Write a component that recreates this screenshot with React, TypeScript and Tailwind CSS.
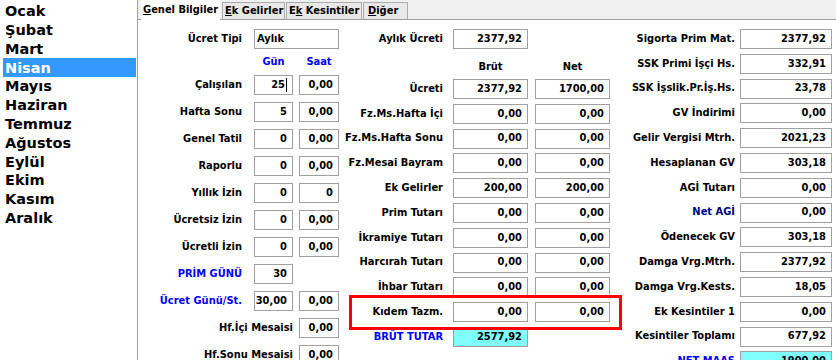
import React from "react";

const months = ["Ocak", "Şubat", "Mart", "Nisan", "Mayıs", "Haziran", "Temmuz", "Ağustos", "Eylül", "Ekim", "Kasım", "Aralık"];

type LeftRow = { label: string; gun?: string; saat?: string; blue?: boolean; caret?: boolean };

const leftRows: LeftRow[] = [
  { label: "Çalışılan", gun: "25", saat: "0,00", caret: true },
  { label: "Hafta Sonu", gun: "5", saat: "0,00" },
  { label: "Genel Tatil", gun: "0", saat: "0,00" },
  { label: "Raporlu", gun: "0", saat: "0,00" },
  { label: "Yıllık İzin", gun: "0", saat: "0" },
  { label: "Ücretsiz İzin", gun: "0", saat: "0,00" },
  { label: "Ücretli İzin", gun: "0", saat: "0,00" },
  { label: "PRİM GÜNÜ", gun: "30", blue: true },
  { label: "Ücret Günü/St.", gun: "30,00", saat: "0,00", blue: true },
  { label: "Hf.İçi Mesaisi", saat: "0,00" },
  { label: "Hf.Sonu Mesaisi", saat: "0,00" },
];

const midRows: [string, string, string][] = [
  ["Ücreti", "2377,92", "1700,00"],
  ["Fz.Ms.Hafta İçi", "0,00", "0,00"],
  ["Fz.Ms.Hafta Sonu", "0,00", "0,00"],
  ["Fz.Mesai Bayram", "0,00", "0,00"],
  ["Ek Gelirler", "200,00", "200,00"],
  ["Prim Tutarı", "0,00", "0,00"],
  ["İkramiye Tutarı", "0,00", "0,00"],
  ["Harcırah Tutarı", "0,00", "0,00"],
  ["İhbar Tutarı", "0,00", "0,00"],
  ["Kıdem Tazm.", "0,00", "0,00"],
];

const rightRows: { label: string; value: string; color?: string; cyan?: boolean }[] = [
  { label: "Sigorta Prim Mat.", value: "2377,92" },
  { label: "SSK Primi İşçi Hs.", value: "332,91" },
  { label: "SSK İşslik.Pr.İş.Hs.", value: "23,78" },
  { label: "GV İndirimi", value: "0,00" },
  { label: "Gelir Vergisi Mtrh.", value: "2021,23" },
  { label: "Hesaplanan GV", value: "303,18" },
  { label: "AGİ Tutarı", value: "0,00" },
  { label: "Net AGİ", value: "0,00", color: "text-[#000080]" },
  { label: "Ödenecek GV", value: "303,18" },
  { label: "Damga Vrg.Mtrh.", value: "2377,92" },
  { label: "Damga Vrg.Kests.", value: "18,05" },
  { label: "Ek Kesintiler 1", value: "0,00" },
  { label: "Kesintiler Toplamı", value: "677,92" },
  { label: "NET MAAŞ", value: "1900,00", color: "text-[#0000ff]", cyan: true },
];

const Box = ({ value, w, cyan, caret }: { value: string; w: string; cyan?: boolean; caret?: boolean }) => (
  <div
    className={`${w} h-[20px] shrink-0 border border-[#a0a0a0] ${cyan ? "bg-[#80ffff]" : "bg-white"} flex items-center justify-end pr-[5px] whitespace-nowrap`}
  >
    <span>{value}</span>
    {caret && <span className="ml-[1px] w-px h-[14px] bg-black" />}
  </div>
);

const App = () => {
  return (
    <div className="relative w-[836px] h-[360px] overflow-hidden bg-white flex font-['DejaVu_Sans',sans-serif] text-black">
      {/* ay listesi */}
      <div className="w-[138px] shrink-0 border-r border-[#a0a0a0] pt-[2px] pl-[3px] pr-[1px]">
        {months.map((m, i) => (
          <div
            key={m}
            className={`h-[18.8px] flex items-center pl-[2px] text-[14.5px] font-bold leading-none ${i === 3 ? "bg-[#3399ff] text-white" : ""}`}
          >
            {m}
          </div>
        ))}
      </div>

      <div className="flex-1 flex flex-col text-[11px] font-bold font-['DejaVu_Sans_Condensed','DejaVu_Sans',sans-serif]">
        {/* sekmeler */}
        <div className="h-[20px] shrink-0 bg-[#f0f0f0] border-b border-[#a0a0a0] flex items-end pl-[3px] whitespace-nowrap">
          <div className="w-[79px] h-[20px] -mb-px bg-white flex items-center pl-[2px]">
            <span>
              <span className="underline">G</span>enel Bilgiler
            </span>
          </div>
          <div className="w-[63px] h-[17px] ml-[2px] bg-[#e8e8e8] border border-b-0 border-[#adadad] flex items-center pl-[2px]">
            <span>
              <span className="underline">E</span>k Gelirler
            </span>
          </div>
          <div className="w-[76px] h-[17px] ml-[1px] bg-[#e8e8e8] border border-b-0 border-[#adadad] flex items-center pl-[2px]">
            <span>
              E<span className="underline">k</span> Kesintiler
            </span>
          </div>
          <div className="w-[45px] h-[17px] ml-[1px] bg-[#e8e8e8] border border-b-0 border-[#adadad] flex items-center pl-[4px]">
            <span>
              <span className="underline">D</span>iğer
            </span>
          </div>
        </div>

        <div className="flex pt-[9px]">
          {/* sol sütun */}
          <div className="w-[207px] shrink-0 flex flex-col">
            <div className="flex items-center h-[20px]">
              <div className="w-[104px] mr-[12px] text-right whitespace-nowrap">Ücret Tipi</div>
              <div className="w-[85px] h-[20px] border border-[#a0a0a0] flex items-center pl-[2px]">Aylık</div>
            </div>
            <div className="h-[26px] flex items-center text-[#0000ff]">
              <div className="ml-[116px] w-[39px] text-center">Gün</div>
              <div className="ml-[6px] w-[40px] text-center">Saat</div>
            </div>
            <div className="flex flex-col gap-[7px]">
              {leftRows.map((r) => (
                <div key={r.label} className="flex items-center h-[20px]">
                  {r.gun !== undefined ? (
                    <>
                      <div className={`w-[104px] mr-[12px] text-right whitespace-nowrap ${r.blue ? "text-[#0000ff]" : ""}`}>
                        {r.label}
                      </div>
                      <Box value={r.gun} w="w-[39px]" caret={r.caret} />
                    </>
                  ) : (
                    <div className="w-[155px] text-right whitespace-nowrap">{r.label}</div>
                  )}
                  {r.saat !== undefined && (
                    <div className="ml-[6px]">
                      <Box value={r.saat} w="w-[40px]" />
                    </div>
                  )}
                </div>
              ))}
            </div>
          </div>

          {/* orta sütun */}
          <div className="w-[270px] shrink-0 flex flex-col">
            <div className="flex items-center h-[20px]">
              <div className="w-[98px] mr-[10px] text-right whitespace-nowrap">Aylık Ücreti</div>
              <Box value="2377,92" w="w-[75px]" />
            </div>
            <div className="h-[30px] flex items-end pb-[5px] leading-[14px]">
              <div className="ml-[108px] w-[75px] text-center">Brüt</div>
              <div className="ml-[7px] w-[75px] text-center">Net</div>
            </div>
            <div className="flex flex-col gap-[4.8px]">
              {midRows.map(([l, b, n]) => (
                <div key={l} className="flex items-center h-[20px]">
                  <div className="w-[98px] mr-[10px] text-right whitespace-nowrap">{l}</div>
                  <Box value={b} w="w-[75px]" />
                  <div className="ml-[7px]">
                    <Box value={n} w="w-[75px]" />
                  </div>
                </div>
              ))}
              <div className="flex items-center h-[20px]">
                <div className="w-[98px] mr-[10px] text-right whitespace-nowrap text-[#0000ff]">BRÜT TUTAR</div>
                <Box value="2577,92" w="w-[75px]" cyan />
              </div>
            </div>
          </div>

          {/* sağ sütun */}
          <div className="flex-1 flex flex-col gap-[4.8px]">
            {rightRows.map((r) => (
              <div key={r.label} className="flex items-center h-[20px]">
                <div className={`w-[120px] mr-[5px] text-right whitespace-nowrap ${r.color ?? ""}`}>{r.label}</div>
                <Box value={r.value} w="w-[92px]" cyan={r.cyan} />
              </div>
            ))}
          </div>
        </div>
      </div>

      {/* işaretleme */}
      <div className="absolute left-[349px] top-[295px] w-[273px] h-[35px] border-[3px] border-[#ff0000]" />
    </div>
  );
};

export default App;
